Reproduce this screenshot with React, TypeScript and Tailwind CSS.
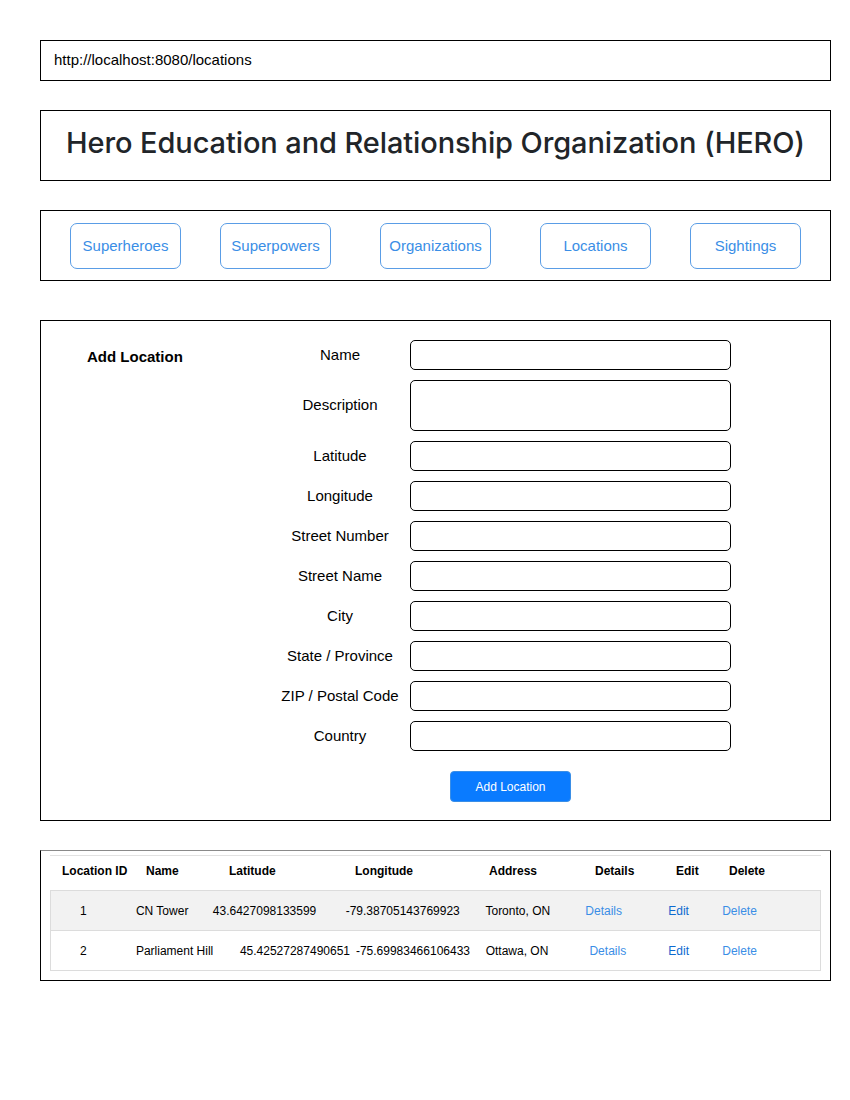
const navItems = [
  { label: "Superheroes", ml: "ml-[29px]" },
  { label: "Superpowers", ml: "ml-[39px]" },
  { label: "Organizations", ml: "ml-[49px]" },
  { label: "Locations", ml: "ml-[49px]" },
  { label: "Sightings", ml: "ml-[39px]" },
];

const fields = [
  { label: "Name", tall: false },
  { label: "Description", tall: true },
  { label: "Latitude", tall: false },
  { label: "Longitude", tall: false },
  { label: "Street Number", tall: false },
  { label: "Street Name", tall: false },
  { label: "City", tall: false },
  { label: "State / Province", tall: false },
  { label: "ZIP / Postal Code", tall: false },
  { label: "Country", tall: false },
];

const colWidths = ["w-[80px]", "w-[75px]", "w-[135px]", "w-[140px]", "w-[100px]", "w-[80px]", "w-[55px]", "w-[105px]"];

type Cell = { text: string; pl: string; color?: string };

const header: Cell[] = [
  { text: "Location ID", pl: "pl-[12px]" },
  { text: "Name", pl: "pl-[16px]" },
  { text: "Latitude", pl: "pl-[24px]" },
  { text: "Longitude", pl: "pl-[15px]" },
  { text: "Address", pl: "pl-[9px]" },
  { text: "Details", pl: "pl-[15px]" },
  { text: "Edit", pl: "pl-[16px]" },
  { text: "Delete", pl: "pl-[14px]" },
];

const rows: Cell[][] = [
  [
    { text: "1", pl: "pl-[29px]" },
    { text: "CN Tower", pl: "pl-[5px]" },
    { text: "43.6427098133599", pl: "pl-[7px]" },
    { text: "-79.38705143769923", pl: "pl-[5px]" },
    { text: "Toronto, ON", pl: "pl-[5px]" },
    { text: "Details", pl: "pl-[5px]", color: "text-[#3a8ee6]" },
    { text: "Edit", pl: "pl-[8px]", color: "text-[#0d6ad0]" },
    { text: "Delete", pl: "pl-[7px]", color: "text-[#3a8ee6]" },
  ],
  [
    { text: "2", pl: "pl-[29px]" },
    { text: "Parliament Hill", pl: "pl-[5px]" },
    { text: "45.42527287490651", pl: "pl-[34px]" },
    { text: "-75.69983466106433", pl: "pl-[15px]" },
    { text: "Ottawa, ON", pl: "pl-[5px]" },
    { text: "Details", pl: "pl-[9px]", color: "text-[#3a8ee6]" },
    { text: "Edit", pl: "pl-[8px]", color: "text-[#0d6ad0]" },
    { text: "Delete", pl: "pl-[7px]", color: "text-[#3a8ee6]" },
  ],
];

export default function App() {
  return (
    <div className="w-[850px] min-h-[1100px] bg-white pt-[40px] font-['Liberation_Sans',Arial,sans-serif] text-black">
      <div className="ml-[40px] w-[791px] flex flex-col">
        {/* url */}
        <div className="h-[41px] border border-black flex items-center pl-[13px] text-[15px]">
          http://localhost:8080/locations
        </div>

        {/* title */}
        <div className="mt-[29px] h-[71px] border border-black flex items-center justify-center pb-[5px]">
          <h1 className="font-['Inter',sans-serif] text-[29px] font-medium text-[#212529] tracking-[-0.1px]">
            Hero Education and Relationship Organization (HERO)
          </h1>
        </div>

        {/* nav */}
        <div className="mt-[29px] h-[71px] border border-black flex items-center">
          {navItems.map((n) => (
            <button
              key={n.label}
              className={`${n.ml} w-[111px] h-[46px] rounded-[7px] border border-[#5a9de6] text-[#3a8ee6] text-[15px] flex items-center justify-center pt-[1px]`}
            >
              {n.label}
            </button>
          ))}
        </div>

        {/* form */}
        <div className="mt-[39px] h-[501px] border border-black flex pt-[19px]">
          <div className="w-[229px] pl-[46px] pt-[6px] text-[15px] font-bold">Add Location</div>
          <div className="flex flex-col gap-[10px]">
            {fields.map((f) => (
              <div key={f.label} className="flex items-center">
                <label className="w-[140px] text-center text-[15px]">{f.label}</label>
                <div
                  className={`w-[321px] ${f.tall ? "h-[51px]" : "h-[30px]"} border border-black rounded-[5px]`}
                ></div>
              </div>
            ))}
            <div className="flex mt-[10px]">
              <button className="ml-[180px] w-[121px] h-[31px] rounded-[4px] bg-[#0a7bff] border border-[#3a8ee6] text-white text-[12px] flex items-center justify-center">
                Add Location
              </button>
            </div>
          </div>
        </div>

        {/* table */}
        <div className="mt-[29px] h-[131px] border border-black border-t-[#8a8a8a] pt-[4px] px-[9px]">
          <div className="border-t border-[#e2e2e2]">
            <div className="flex h-[34px] items-center pb-[4px] text-[12px] font-bold">
              {header.map((c, i) => (
                <div key={c.text} className={`${colWidths[i]} ${c.pl}`}>
                  {c.text}
                </div>
              ))}
            </div>
            <div className="border-x border-b border-[#dcdcdc]">
              {rows.map((r, ri) => (
                <div
                  key={ri}
                  className={`flex h-[40px] items-center text-[12px] border-t border-[#dcdcdc] ${
                    ri === 0 ? "bg-[#f2f2f2]" : "bg-white"
                  }`}
                >
                  {r.map((c, i) => (
                    <div key={i} className={`${colWidths[i]} ${c.pl} ${c.color ?? ""} whitespace-nowrap`}>
                      {c.text}
                    </div>
                  ))}
                </div>
              ))}
            </div>
          </div>
        </div>
      </div>
    </div>
  );
}
